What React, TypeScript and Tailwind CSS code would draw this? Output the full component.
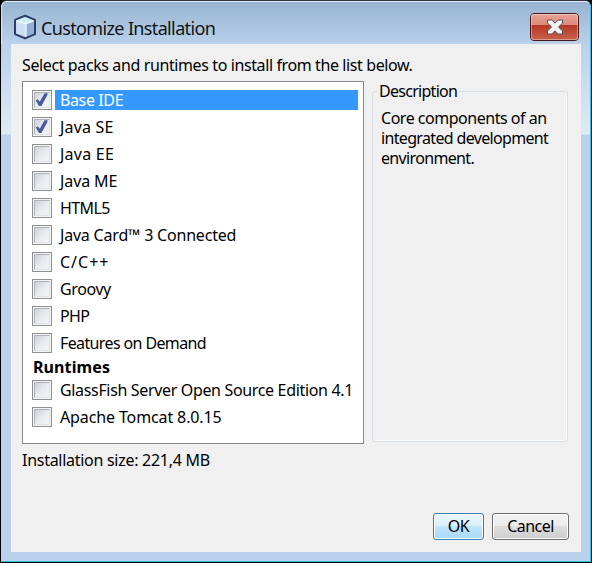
import { ReactNode } from 'react'

interface Pack {
  name: string
  checked?: boolean
  selected?: boolean
  tracking?: string
}

const packs: Pack[] = [
  { name: 'Base IDE', checked: true, selected: true, tracking: 'tracking-[-0.38px]' },
  { name: 'Java SE', checked: true, tracking: 'tracking-[0.2px]' },
  { name: 'Java EE', tracking: 'tracking-[0.25px]' },
  { name: 'Java ME', tracking: 'tracking-[-0.1px]' },
  { name: 'HTML5', tracking: 'tracking-[-0.6px]' },
  { name: 'Java Card™ 3 Connected', tracking: 'tracking-[-0.2px]' },
  { name: 'C/C++', tracking: 'tracking-[1px]' },
  { name: 'Groovy', tracking: 'tracking-[-0.4px]' },
  { name: 'PHP', tracking: 'tracking-[-0.6px]' },
  { name: 'Features on Demand', tracking: 'tracking-[-0.62px]' },
]

const runtimes: Pack[] = [
  { name: 'GlassFish Server Open Source Edition 4.1', tracking: 'tracking-[-0.34px]' },
  { name: 'Apache Tomcat 8.0.15', tracking: 'tracking-[-0.12px]' },
]

function CubeIcon() {
  return (
    <svg width="24" height="26" viewBox="0 0 24 26" className="shrink-0">
      <path d="M12 1.8 22 5.9v14.2L12 24.4 2 20.1V5.9z" fill="#b5cde8" stroke="#2c3a66" strokeWidth="2" strokeLinejoin="round" />
      <path d="M12 3 20.8 6.6 13 9.4 3.2 6.6z" fill="#c9eef2" />
      <path d="M3.2 6.8 13 9.6v13L3.2 19.3z" fill="#cfdff2" />
      <path d="M13 9.6l7.8-2.8v12.5L13 22.6z" fill="#8fb0d8" />
      <path d="M3.2 6.8 13 9.6l7.8-2.8M13 9.6v13" fill="none" stroke="#f6fbff" strokeWidth="1.2" />
    </svg>
  )
}

function Checkbox({ checked }: { checked?: boolean }) {
  return (
    <span className="flex w-5 h-5 shrink-0 items-center justify-center border border-[#8e8f8f] bg-[#f4f4f4]">
      <span className="block w-4 h-4 border border-t-[#aeb3b9] border-l-[#aeb3b9] border-r-[#dfe2e6] border-b-[#dfe2e6] bg-linear-to-br from-[#ccd1d9] via-[#e8eaec] to-[#f6f6f6]">
        {checked && (
          <svg width="14" height="14" viewBox="0 0 14 14" className="block">
            <path d="M0.8 7.6 2.8 6.2 4.8 8.8 9.6 0.2 12.6 0.2 12.4 2 6.4 13 4 13z" fill="#46599c" />
          </svg>
        )}
      </span>
    </span>
  )
}

function PackRow({ pack }: { pack: Pack }) {
  return (
    <div className="flex h-[27px] items-start gap-[3px]">
      <Checkbox checked={pack.checked} />
      <span className={`flex-1 h-5 pl-[5px] leading-5 whitespace-nowrap ${pack.selected ? 'bg-[#3399ff] text-white' : ''}`}>
        <span className={pack.tracking}>{pack.name}</span>
      </span>
    </div>
  )
}

function Button({ className, children }: { className: string; children: ReactNode }) {
  return (
    <button className={`h-[27px] rounded-[3px] border leading-5 pb-0.5 shadow-[inset_0_0_0_1px_#fbfdfe] ${className}`}>
      {children}
    </button>
  )
}

export default function App() {
  return (
    <div className="w-[592px] h-[563px] bg-black">
      <div className="flex flex-col w-[592px] h-[563px] rounded-t-[7px] border border-t-[#30343b] border-l-black border-r-black border-b-black bg-[#b9d1ea] font-['Noto_Sans',sans-serif] text-base text-black">
        <header className="flex h-[43px] shrink-0 justify-between rounded-t-md border-t border-l border-r border-t-white/60 border-l-white/60 border-r-[#2bc4e8] bg-linear-to-b from-[#98b4d2] to-[#b9d1ea] px-[11px]">
          <div className="flex items-start gap-1 pt-3">
            <CubeIcon />
            <h1 className="pt-0.5 text-[18px] leading-6 tracking-[-0.64px] text-[#101418]">Customize Installation</h1>
          </div>
          <button aria-label="Close" className="mt-[11px] h-7 w-[49px] rounded-sm border border-[#471420] bg-[#dc8878]">
            <span className="flex h-full w-full items-center justify-center rounded-[3px] bg-[linear-gradient(#e6a497_0,#dc8878_44%,#b53a26_44%,#c9604a_100%)] shadow-[inset_0_0_0_1px_#ffffff60]">
              <svg width="18" height="16" viewBox="0 0 18 16">
                <path d="M1.5 1h4.3L9 4.2 12.2 1h4.3v3l-4 4 4 4v3h-4.3L9 11.8 5.8 15H1.5v-3l4-4-4-4z" fill="#f4f4f4" stroke="#50515e" strokeLinejoin="round" />
              </svg>
            </span>
          </button>
        </header>
        <div className="flex grow border-r border-b border-[#2bc4e8] bg-[linear-gradient(#b9d1ea_0,#dfeaf6_90px,#b9d1ea_91px)] pl-[10px] pr-[9px]">
          <main className="mb-[9px] flex grow flex-col bg-[#f0f0f0] pl-[11px] pr-3">
            <p className="h-[37px] pt-[9px] leading-6 tracking-[-0.39px]">Select packs and runtimes to install from the list below.</p>
            <div className="flex h-[363px] gap-2">
              <div className="w-[342px] border border-[#828790] bg-white pt-2 pl-[9px] pr-[5px]">
                {packs.map(p => <PackRow key={p.name} pack={p} />)}
                <div className="-mt-[3px] h-[23px] pl-px leading-5 font-bold tracking-[0.1px]">Runtimes</div>
                {runtimes.map(p => <PackRow key={p.name} pack={p} />)}
              </div>
              <fieldset className="w-[196px] h-[361px] rounded-[3px] border border-[#d5dfe5] pl-2 shadow-[inset_-1px_0_0_#fbfbfb,inset_0_-1px_0_#fbfbfb]">
                <legend className="-ml-1 px-0.5 leading-5 tracking-[-0.72px]">Description</legend>
                <p className="mt-[7px] leading-5 tracking-[-0.66px]">
                  <span className="tracking-[-0.48px]">Core components of an</span><br />
                  integrated development<br />
                  environment.
                </p>
              </fieldset>
            </div>
            <p className="pt-1.5 leading-5 tracking-[-0.28px]">Installation size: 221,4 MB</p>
            <footer className="mt-auto mb-3 flex justify-end gap-2">
              <Button className="w-[51px] border-[#3c7fb1] bg-[linear-gradient(#e8f6fd_0,#d9f0fc_50%,#bee6fd_50%,#a7d9f5_100%)] tracking-[-0.4px]">OK</Button>
              <Button className="w-[77px] border-[#707070] bg-[linear-gradient(#f2f2f2_0,#ebebeb_50%,#dddddd_50%,#cfcfcf_100%)] tracking-[-0.55px]">Cancel</Button>
            </footer>
          </main>
        </div>
      </div>
    </div>
  )
}
